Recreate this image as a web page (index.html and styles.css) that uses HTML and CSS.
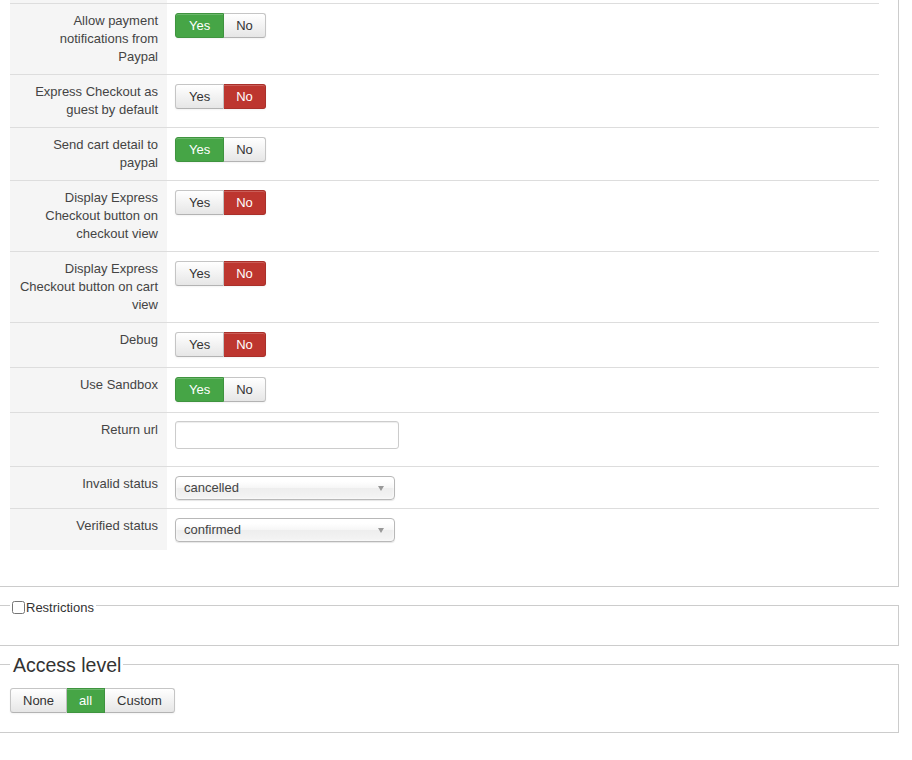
FILE: index.html
```html
<!DOCTYPE html>
<html>
<head>
<meta charset="utf-8">
<link rel="stylesheet" href="styles.css">
</head>
<body>
<div class="panel">
  <table class="form">
    <colgroup><col class="c-label"><col class="c-ctrl"></colgroup>
    <tr class="cut"><td class="label"></td><td></td></tr>
    <tr>
      <td class="label">Allow payment notifications from Paypal</td>
      <td class="ctrl"><div class="btn-group yn"><span class="btn on-yes">Yes</span><span class="btn">No</span></div></td>
    </tr>
    <tr>
      <td class="label">Express Checkout as guest by default</td>
      <td class="ctrl"><div class="btn-group yn"><span class="btn">Yes</span><span class="btn on-no">No</span></div></td>
    </tr>
    <tr>
      <td class="label">Send cart detail to paypal</td>
      <td class="ctrl"><div class="btn-group yn"><span class="btn on-yes">Yes</span><span class="btn">No</span></div></td>
    </tr>
    <tr>
      <td class="label">Display Express Checkout button on checkout view</td>
      <td class="ctrl"><div class="btn-group yn"><span class="btn">Yes</span><span class="btn on-no">No</span></div></td>
    </tr>
    <tr>
      <td class="label">Display Express Checkout button on cart view</td>
      <td class="ctrl"><div class="btn-group yn"><span class="btn">Yes</span><span class="btn on-no">No</span></div></td>
    </tr>
    <tr>
      <td class="label">Debug</td>
      <td class="ctrl"><div class="btn-group yn"><span class="btn">Yes</span><span class="btn on-no">No</span></div></td>
    </tr>
    <tr>
      <td class="label">Use Sandbox</td>
      <td class="ctrl"><div class="btn-group yn"><span class="btn on-yes">Yes</span><span class="btn">No</span></div></td>
    </tr>
    <tr>
      <td class="label">Return url</td>
      <td class="ctrl"><input class="text-input" type="text"></td>
    </tr>
    <tr>
      <td class="label">Invalid status</td>
      <td class="ctrl"><div class="select"><span>cancelled</span><i class="arrow"></i></div></td>
    </tr>
    <tr>
      <td class="label">Verified status</td>
      <td class="ctrl"><div class="select"><span>confirmed</span><i class="arrow"></i></div></td>
    </tr>
  </table>
</div>

<fieldset class="box restrictions">
  <legend class="small-legend"><input type="checkbox" class="check">Restrictions</legend>
</fieldset>

<fieldset class="box access">
  <legend class="big-legend">Access level</legend>
  <div class="btn-group"><span class="btn">None</span><span class="btn on-yes">all</span><span class="btn">Custom</span></div>
</fieldset>
</body>
</html>
```

FILE: styles.css
```css
* { box-sizing: border-box; }

body {
  margin: 0;
  font-family: "Liberation Sans", Arial, sans-serif;
  font-size: 13px;
  line-height: 18px;
  color: #333;
  background: #fff;
}

.panel {
  width: 899px;
  border-right: 1px solid #ccc;
  border-bottom: 1px solid #ccc;
  padding: 0 0 36px 10px;
}

.form {
  width: 869px;
  table-layout: fixed;
  border-collapse: collapse;
}

.c-label { width: 157px; }

.form td {
  border-top: 1px solid #ddd;
  vertical-align: top;
  padding: 8px;
}

.form .cut td {
  border-top: 0;
  padding: 0;
  height: 3px;
}

.form .label {
  background: #f5f5f5;
  text-align: right;
  padding: 8px 9px 8px 8px;
  color: #444;
}

.btn-group {
  display: flex;
  margin: 1px 0 2px;
}

.btn {
  display: block;
  height: 25px;
  padding: 3px 12px 0;
  line-height: 18px;
  font-size: 13px;
  color: #333;
  border: 1px solid #c5c5c5;
  border-bottom-color: #b3b3b3;
  background: linear-gradient(#ffffff, #e6e6e6);
  box-shadow: inset 0 1px 0 rgba(255,255,255,.2), 0 1px 2px rgba(0,0,0,.05);
}

.btn + .btn { border-left: 0; }

.yn .btn:first-child { padding: 3px 13px 0; }

.btn:first-child { border-radius: 3px 0 0 3px; }
.btn:last-child { border-radius: 0 3px 3px 0; }

.btn.on-yes {
  background: #46a546;
  border-color: #3f943f;
  color: #fff;
}

.btn.on-no {
  background: #bd362f;
  border-color: #a9302a;
  color: #fff;
}

.text-input {
  display: block;
  width: 224px;
  height: 28px;
  margin: 0 0 9px;
  border: 1px solid #ccc;
  border-radius: 3px;
  box-shadow: inset 0 1px 1px rgba(0,0,0,.075);
  background: #fff;
  padding: 4px 6px;
}

.select {
  position: relative;
  width: 220px;
  height: 24px;
  margin-top: 1px;
  border: 1px solid #b8b8b8;
  border-radius: 4px;
  background: linear-gradient(#ffffff 20%, #f6f6f6 50%, #eeeeee 52%, #f4f4f4 100%);
  box-shadow: inset 0 0 3px #fff, 0 1px 1px rgba(0,0,0,.1);
  padding: 2px 0 0 8px;
  color: #444;
  line-height: 18px;
}

.select .arrow {
  position: absolute;
  right: 10px;
  top: 9px;
  width: 0;
  height: 0;
  border-left: 3px solid transparent;
  border-right: 3px solid transparent;
  border-top: 5px solid #999;
}

.box {
  width: 899px;
  margin: 0;
  border: 1px solid #ccc;
  border-left: 0;
  padding: 0 0 0 10px;
}

.restrictions {
  margin-top: 8px;
  padding-bottom: 28px;
}

.small-legend {
  padding: 4px 2px 0;
  line-height: 18px;
  font-size: 13px;
  color: #333;
  display: flex;
  align-items: center;
}

.check {
  width: 13px;
  height: 13px;
  margin: 0 1px 0 0;
}

.access {
  margin-top: 7px;
  padding-bottom: 19px;
}

.big-legend {
  padding: 0 2px 0 3px;
  font-size: 19.5px;
  line-height: 24px;
  color: #333;
}

.access .btn-group {
  margin: 11px 0 0;
}
```
